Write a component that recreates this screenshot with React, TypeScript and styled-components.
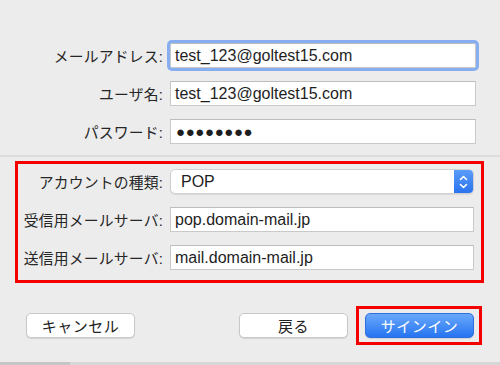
import React from 'react';
import styled, { createGlobalStyle } from 'styled-components';

// ==============================================================================
// Global
// ==============================================================================

const GlobalStyle = createGlobalStyle`
  html, body {
    margin: 0;
    padding: 0;
    background: #ececec;
  }
  * {
    box-sizing: border-box;
  }
`;

const JP_FONT = `"Liberation Sans", "Noto Sans CJK JP", sans-serif`;

// ==============================================================================
// Styled Components
// ==============================================================================

const Sheet = styled.div`
  width: 500px;
  height: 365px;
  overflow: hidden;
  background: #ececec;
  font-family: ${JP_FONT};
  color: #262626;
  display: flex;
  flex-direction: column;
`;

const AccountSection = styled.section`
  display: grid;
  grid-template-columns: 163px 306px;
  column-gap: 7px;
  row-gap: 13px;
  padding-top: 43px;
  padding-bottom: 11px;
  align-items: center;
`;

const Separator = styled.hr`
  margin: 0;
  border: none;
  height: 2px;
  flex-shrink: 0;
  background: #dcdcdc;
`;

const HighlightBox = styled.section`
  margin: 4px 16px 0 15px;
  border: 3px solid #f40000;
  display: grid;
  grid-template-columns: 145px 304px;
  column-gap: 7px;
  row-gap: 13px;
  padding: 5px 0 10px;
  align-items: center;
`;

const Label = styled.label`
  text-align: right;
  font-size: 14.8px;
  white-space: nowrap;
  color: #262626;
  letter-spacing: 0.2px;
`;

const TextField = styled.div<{ $focused?: boolean }>`
  height: 25px;
  background: #fff;
  border: 1px solid #c9c9c9;
  border-top-color: #bdbdbd;
  display: flex;
  align-items: center;
  padding-left: 4px;
  font-family: "Liberation Sans", Arial, sans-serif;
  font-size: 16px;
  color: #1e1e1e;
  box-shadow: ${(p) => (p.$focused ? '0 0 0 3px #86aef0' : 'none')};
  border-radius: ${(p) => (p.$focused ? '2px' : '0')};
`;

const Dots = styled.span`
  font-size: 15px;
  letter-spacing: 0.6px;
  padding-left: 1px;
`;

const Popup = styled.div`
  height: 25px;
  background: #fff;
  border: 1px solid #d0d0d0;
  border-radius: 5px;
  display: flex;
  align-items: stretch;
  overflow: hidden;
  box-shadow: 0 1px 1px rgba(0, 0, 0, 0.08);
`;

const PopupValue = styled.span`
  flex: 1;
  display: flex;
  align-items: center;
  padding-left: 10px;
  font-family: "Liberation Sans", Arial, sans-serif;
  font-size: 16px;
  color: #1e1e1e;
`;

const Stepper = styled.span`
  width: 19px;
  background: linear-gradient(#5a9cf8, #2a73ef);
  display: flex;
  align-items: center;
  justify-content: center;
`;

const ButtonRow = styled.div`
  display: flex;
  align-items: center;
  padding: 23px 18px 0 26px;
`;

const Spacer = styled.div`
  flex: 1;
`;

const Button = styled.button<{ $primary?: boolean }>`
  width: 109px;
  height: 25px;
  border-radius: 5px;
  font-family: ${JP_FONT};
  font-size: 15px;
  padding: 0;
  border: 1px solid ${(p) => (p.$primary ? '#2f6fe0' : '#c8c8c8')};
  background: ${(p) => (p.$primary ? 'linear-gradient(#6aa8fb, #2574f1)' : '#fff')};
  color: ${(p) => (p.$primary ? '#fff' : '#222')};
  box-shadow: 0 1px 1px rgba(0, 0, 0, 0.1);
  letter-spacing: 0.5px;
`;

const PrimaryFrame = styled.div`
  margin-left: 8px;
  border: 3px solid #f40000;
  padding: 4px 5px 4px 6px;
  display: flex;
`;

const BottomEdge = styled.div`
  margin-top: auto;
  height: 3px;
  flex-shrink: 0;
  background: linear-gradient(to right, #c6c6c6 70px, #d6d6d6 70px);
`;

// ==============================================================================
// Icons
// ==============================================================================

const StepperIcon = () => (
  <svg width="9" height="16" viewBox="0 0 9 16" fill="none">
    <path d="M1.5 5.5 L4.5 2.5 L7.5 5.5" stroke="#fff" strokeWidth="1.6" strokeLinecap="round" strokeLinejoin="round" />
    <path d="M1.5 10.5 L4.5 13.5 L7.5 10.5" stroke="#fff" strokeWidth="1.6" strokeLinecap="round" strokeLinejoin="round" />
  </svg>
);

// ==============================================================================
// Main Component
// ==============================================================================

const App: React.FC = () => {
  return (
    <Sheet>
      <GlobalStyle />
      <AccountSection>
        <Label>メールアドレス:</Label>
        <TextField $focused>test_123@goltest15.com</TextField>
        <Label>ユーザ名:</Label>
        <TextField>test_123@goltest15.com</TextField>
        <Label>パスワード:</Label>
        <TextField>
          <Dots>●●●●●●●●</Dots>
        </TextField>
      </AccountSection>

      <Separator />

      <HighlightBox>
        <Label>アカウントの種類:</Label>
        <Popup>
          <PopupValue>POP</PopupValue>
          <Stepper>
            <StepperIcon />
          </Stepper>
        </Popup>
        <Label>受信用メールサーバ:</Label>
        <TextField>pop.domain-mail.jp</TextField>
        <Label>送信用メールサーバ:</Label>
        <TextField>mail.domain-mail.jp</TextField>
      </HighlightBox>

      <ButtonRow>
        <Button>キャンセル</Button>
        <Spacer />
        <Button>戻る</Button>
        <PrimaryFrame>
          <Button $primary>サインイン</Button>
        </PrimaryFrame>
      </ButtonRow>

      <BottomEdge />
    </Sheet>
  );
};

export default App;
